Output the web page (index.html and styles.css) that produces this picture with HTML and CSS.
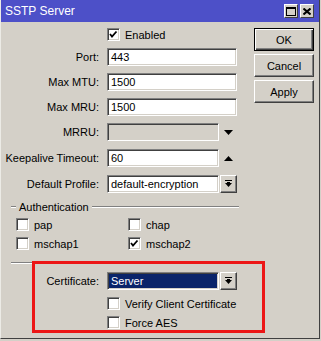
FILE: index.html
```html
<!DOCTYPE html>
<html lang="en">
<head>
    <meta charset="UTF-8">
    <meta name="viewport" content="width=device-width, initial-scale=1.0">
    <title>SSTP Server</title>
    <link rel="stylesheet" href="styles.css">
</head>
<body>
    <div class="window">
        <div class="titlebar">
            <span class="title">SSTP Server</span>
            <div class="title-buttons">
                <span class="tbtn">
                    <svg width="10" height="9" viewBox="0 0 10 9"><rect x="0.5" y="0.5" width="9" height="8" fill="none" stroke="#000"/><rect x="0" y="0" width="10" height="2" fill="#000"/></svg>
                </span>
                <span class="tbtn">
                    <svg width="8" height="7" viewBox="0 0 8 7"><path d="M0.5 0.5 L7.5 6.5 M7.5 0.5 L0.5 6.5" stroke="#000" stroke-width="2"/></svg>
                </span>
            </div>
        </div>

        <div class="client">
            <div class="form">
                <div class="row check-row">
                    <span></span>
                    <label class="check"><span class="cb checked"></span>Enabled</label>
                </div>
                <div class="row">
                    <span class="label">Port:</span>
                    <span class="input">443</span>
                </div>
                <div class="row">
                    <span class="label">Max MTU:</span>
                    <span class="input">1500</span>
                </div>
                <div class="row">
                    <span class="label">Max MRU:</span>
                    <span class="input">1500</span>
                </div>
                <div class="row">
                    <span class="label">MRRU:</span>
                    <div class="field">
                        <span class="input short disabled"></span>
                        <span class="arrow">
                            <svg width="9" height="5" viewBox="0 0 9 5"><polygon points="0,0 9,0 4.5,5" fill="#000"/></svg>
                        </span>
                    </div>
                </div>
                <div class="row shift">
                    <span class="label">Keepalive Timeout:</span>
                    <div class="field">
                        <span class="input short">60</span>
                        <span class="arrow">
                            <svg width="9" height="5" viewBox="0 0 9 5"><polygon points="0,5 9,5 4.5,0" fill="#000"/></svg>
                        </span>
                    </div>
                </div>
                <div class="row shift">
                    <span class="label">Default Profile:</span>
                    <div class="field">
                        <span class="input short">default-encryption</span>
                        <span class="dd-btn">
                            <svg width="7" height="8" viewBox="0 0 7 8"><rect x="0" y="0" width="7" height="1" fill="#000"/><polygon points="0,3 7,3 3.5,7" fill="#000"/><rect x="2" y="2" width="3" height="2" fill="#000"/></svg>
                        </span>
                    </div>
                </div>

                <div class="group">
                    <div class="group-head">
                        <span class="etch lead"></span>
                        <span class="group-title">Authentication</span>
                        <span class="etch grow"></span>
                    </div>
                    <div class="group-grid">
                        <label class="check"><span class="cb"></span>pap</label>
                        <label class="check"><span class="cb"></span>chap</label>
                        <label class="check"><span class="cb"></span>mschap1</label>
                        <label class="check"><span class="cb checked"></span>mschap2</label>
                    </div>
                </div>

                <div class="etch separator"></div>

                <div class="row">
                    <span class="label">Certificate:</span>
                    <div class="field">
                        <span class="input short selected">Server</span>
                        <span class="dd-btn">
                            <svg width="7" height="8" viewBox="0 0 7 8"><rect x="0" y="0" width="7" height="1" fill="#000"/><polygon points="0,3 7,3 3.5,7" fill="#000"/><rect x="2" y="2" width="3" height="2" fill="#000"/></svg>
                        </span>
                    </div>
                </div>
                <div class="row check-row tight">
                    <span></span>
                    <label class="check"><span class="cb"></span>Verify Client Certificate</label>
                </div>
                <div class="row check-row tight">
                    <span></span>
                    <label class="check"><span class="cb"></span>Force AES</label>
                </div>
            </div>

            <div class="actions">
                <button class="btn default">OK</button>
                <button class="btn">Cancel</button>
                <button class="btn">Apply</button>
            </div>
        </div>

        <div class="highlight"></div>
    </div>
</body>
</html>
```

FILE: styles.css
```css
* {
    margin: 0;
    padding: 0;
    box-sizing: border-box;
}

body {
    font-family: "Liberation Sans", Arial, sans-serif;
    font-size: 11px;
    color: #000;
    background-color: #d4d0c8;
}

.window {
    position: relative;
    width: 320px;
    height: 339px;
    background-color: #d4d0c8;
    border-left: 1px solid #ecebe6;
    border-right: 1px solid #404040;
    border-bottom: 1px solid #404040;
}

.titlebar {
    height: 22px;
    background-color: #4d50c8;
    color: #fff;
    display: flex;
    align-items: center;
    justify-content: space-between;
    padding: 0 5px 0 4px;
}

.title {
    font-size: 12px;
    line-height: 14px;
}

.title-buttons {
    display: flex;
    gap: 2px;
}

.tbtn {
    width: 14px;
    height: 14px;
    background-color: #d4d0c8;
    border: 1px solid;
    border-color: #fff #404040 #404040 #fff;
    display: flex;
    align-items: center;
    justify-content: center;
}

.client {
    display: flex;
    padding-top: 6px;
}

.form {
    width: 245px;
    display: flex;
    flex-direction: column;
}

.row {
    display: grid;
    grid-template-columns: 98px 130px;
    column-gap: 8px;
    align-items: center;
    height: 18px;
    margin-bottom: 7px;
}

.row.shift {
    margin-top: 1px;
}

.check-row {
    height: 13px;
}

.check-row.tight {
    margin-bottom: 6px;
}

.label {
    text-align: right;
    white-space: nowrap;
}

.field {
    display: flex;
    align-items: center;
    height: 18px;
}

.input {
    display: block;
    height: 18px;
    width: 130px;
    background-color: #fff;
    border: 1px solid;
    border-color: #808080 #fff #fff #808080;
    box-shadow: inset 1px 1px 0 #404040, inset -1px -1px 0 #d4d0c8;
    padding: 0 3px;
    line-height: 16px;
    white-space: nowrap;
    overflow: hidden;
}

.input.short {
    width: 112px;
}

.input.disabled {
    background-color: #d4d0c8;
}

.input.selected {
    background-color: #0a246a;
    color: #fff;
}

.arrow {
    width: 18px;
    display: flex;
    justify-content: center;
}

.dd-btn {
    width: 17px;
    height: 18px;
    margin-left: 1px;
    background-color: #d4d0c8;
    border: 1px solid;
    border-color: #fff #404040 #404040 #fff;
    box-shadow: inset -1px -1px 0 #808080;
    display: flex;
    align-items: center;
    justify-content: center;
}

.check {
    display: flex;
    align-items: center;
    gap: 5px;
    height: 13px;
    white-space: nowrap;
}

.cb {
    width: 13px;
    height: 13px;
    flex: none;
    background-color: #fff;
    border: 1px solid;
    border-color: #808080 #fff #fff #808080;
    box-shadow: inset 1px 1px 0 #404040, inset -1px -1px 0 #d4d0c8;
}

.cb.checked {
    background: #fff url("data:image/svg+xml;utf8,<svg xmlns='http://www.w3.org/2000/svg' width='11' height='11'><path d='M2 5 L4 7.5 L8.5 2.5' stroke='black' stroke-width='1.8' fill='none'/></svg>") no-repeat center;
}

.group {
    margin: 0 7px 0 10px;
}

.group-head {
    display: flex;
    align-items: center;
    height: 13px;
}

.etch {
    height: 2px;
    border-top: 1px solid #808080;
    border-bottom: 1px solid #fff;
}

.etch.lead {
    width: 5px;
}

.etch.grow {
    flex: 1;
}

.group-title {
    padding: 0 3px;
}

.group-grid {
    display: grid;
    grid-template-columns: 112px 100px;
    row-gap: 6px;
    padding: 5px 0 0 5px;
}

.separator {
    margin: 12px 7px 8px 10px;
}

.actions {
    display: flex;
    flex-direction: column;
    gap: 3px;
    margin-left: 8px;
}

.btn {
    width: 60px;
    height: 23px;
    font-family: "Liberation Sans", Arial, sans-serif;
    font-size: 11px;
    color: #000;
    background-color: #d4d0c8;
    border: 1px solid;
    border-color: #fff #404040 #404040 #fff;
    box-shadow: inset -1px -1px 0 #808080;
}

.btn.default {
    border: 1px solid #000;
    box-shadow: inset 1px 1px 0 #fff, inset -1px -1px 0 #404040, inset -2px -2px 0 #808080;
}

.highlight {
    position: absolute;
    left: 31px;
    top: 261px;
    width: 233px;
    height: 72px;
    border: 3px solid #ec1616;
}
```
